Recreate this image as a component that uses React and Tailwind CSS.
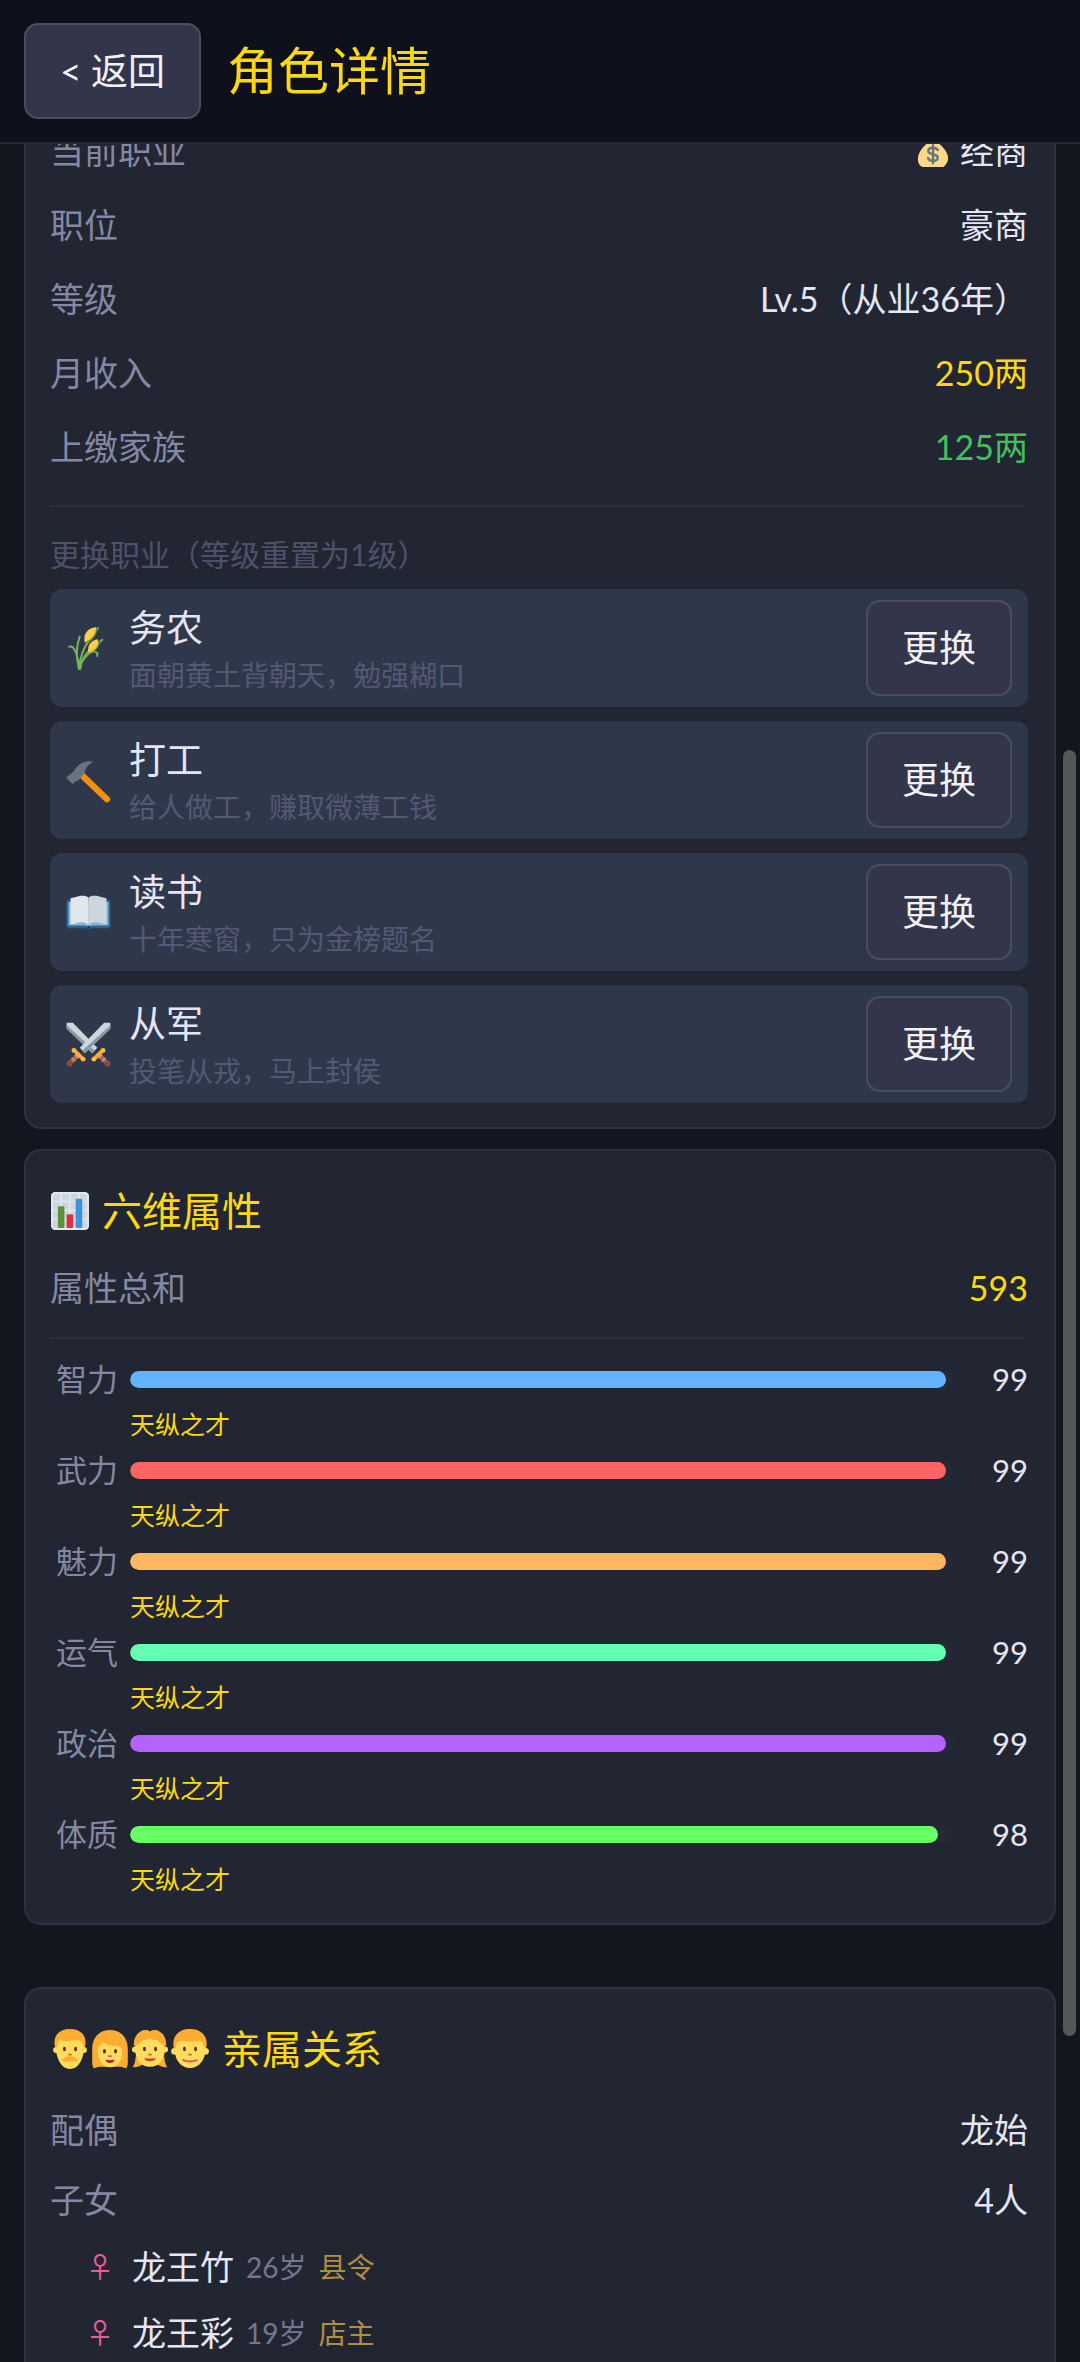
import React from "react";

const careerRows = [
  { label: "当前职业", value: "经商", color: "text-[#e4e6f5]", icon: true },
  { label: "职位", value: "豪商", color: "text-[#e4e6f5]" },
  { label: "等级", value: "Lv.5（从业36年）", color: "text-[#e4e6f5]" },
  { label: "月收入", value: "250两", color: "text-[#fbd814]" },
  { label: "上缴家族", value: "125两", color: "text-[#43c05c]" },
];

const stats = [
  { label: "智力", value: 99, color: "bg-[#63b3ff]" },
  { label: "武力", value: 99, color: "bg-[#ff6363]" },
  { label: "魅力", value: 99, color: "bg-[#ffb663]" },
  { label: "运气", value: 99, color: "bg-[#63ffb3]" },
  { label: "政治", value: 99, color: "bg-[#b363ff]" },
  { label: "体质", value: 98, color: "bg-[#66ff66]" },
];

const children = [
  { name: "龙王竹", age: "26岁", job: "县令" },
  { name: "龙王彩", age: "19岁", job: "店主" },
];

function MoneyBag() {
  return (
    <svg viewBox="0 0 36 36" className="size-[34px] shrink-0" aria-hidden="true">
      <path fill="#fdd888" d="M13 9 9.500 2.500c2-2 4.500.5 8.500-1.500 3 2 6 0 8.500 1.500L23 9c5 4 11 10 11 17 0 3-2 7-5 9H7c-3-1-5-4-5-8 0-8 6-14 11-18z" />
      <path fill="#bf6952" d="M12 6h12v2H12z" />
      <path fill="none" stroke="#67757f" strokeWidth="2.600" strokeLinecap="round" d="M18 12v19M23 17c-1-2-3-2.500-5-2.500-3 0-5 1.300-5 3.400 0 5 10 2.200 10 7 0 2-2 3.600-5 3.600-2.500 0-4.500-1-5.200-3" />
    </svg>
  );
}

function Rice() {
  return (
    <svg viewBox="0 0 36 36" className="size-[45px]" aria-hidden="true">
      <g fill="none" stroke="#77b255" strokeWidth="1.600" strokeLinecap="round">
        <path d="M10.500 34C8 25 8.500 15 11 8.500" />
        <path d="M9.500 27C8 20 6 15.500 2.500 16.500" />
        <path d="M11 34C11 25 14 17 19 11L25.500 1.500" />
        <path d="M11.500 34c1-7 5-13 9-16L29 11" />
        <path d="M12.500 29c4-6 7-9 10.500-8.500 2 .3 2.500 2 2 3.500" />
      </g>
      <path fill="#5c913b" d="M15 13.500c4 .5 10-5 10-12l-5 4z" />
      <path fill="#ffcc4d" d="M15 13c-1.500-6 2-11.500 9-12 .5 5-3.500 10-9 12z" />
      <path fill="#5c913b" d="M18 22c5-.5 9-5 9.500-10l-5 3z" />
      <path fill="#ffcc4d" d="M18 21.500c-1.500-5.500 2-10.500 7.500-11 1.500 4.500-2 9.500-7.500 11z" />
      <path fill="#77b255" d="M9 27h3.500L12 35h-2.500z" />
    </svg>
  );
}

function Hammer() {
  return (
    <svg viewBox="0 0 36 36" className="size-[45px]" aria-hidden="true">
      <path stroke="#f4900c" strokeWidth="5" strokeLinecap="round" d="M12.500 13.500 32.800 33" />
      <path fill="#66757f" d="M22 3C16 1.500 11 4 7.500 8.500c-1 1.500-1.500 2.500-3 3.500L.8 15c-.6.500-.4 1 0 1.400l3.800 3.900c.5.500 1 .4 1.400 0l1-1.300c.8-.8 1.600-.3 2.500-.6L15 12c0-3.500 3-7 7-9z" />
    </svg>
  );
}

function Book() {
  return (
    <svg viewBox="0 0 36 36" className="size-[45px]" aria-hidden="true">
      <path fill="#226699" d="M2 8h32c1 0 1.600.8 1.600 2v18.500c0 1.200-.8 2-2 2H20c-.6 1-3.400 1-4 0H2.400c-1.200 0-2-.8-2-2V10C.4 8.800 1 8 2 8z" />
      <path fill="#8fb4cf" d="M2 9.500h32v18.800H20.500L18 29.500l-2.500-1.200H2z" />
      <path fill="#e1e8ed" d="M3.600 6.500C8 6 10 4.600 13 4.600c2.500 0 4 .4 5 1.600v21.500c-2-1.800-4-2-6-2-3 0-4.500 1.600-8.400 1.500z" />
      <path fill="#ccd6dd" d="M32.400 6.500C28 6 26 4.600 23 4.600c-2.500 0-4 .4-5 1.600v21.500c2-1.800 4-2 6-2 3 0 4.500 1.600 8.400 1.500z" />
      <path fill="#99aab5" d="M12 26.500c2.500-.6 5 .3 6 1.700 1-1.400 3.500-2.300 6-1.700-2 .4-4.500 1-6 2.200-1.500-1.200-4-1.800-6-2.200z" />
      <circle cx="18" cy="29.500" r="1" fill="#0d3a5c" />
    </svg>
  );
}

function Sword() {
  return (
    <>
      <path fill="#ccd6dd" d="M.5.500h5L25 20.500 21 25 .5 5z" />
      <path fill="#8899a6" d="M.5 2.500 23 23l-2 2L.5 5.500z" />
      <path stroke="#aa695b" strokeWidth="3.600" d="m25 25 7 7" />
      <path stroke="#d99e82" strokeWidth="1" d="m26 29 3-3M28.500 31.500l3-3" />
      <path stroke="#ffac33" strokeWidth="3" strokeLinecap="round" d="m22.500 29.500 6.500-6.500" />
      <circle cx="22.300" cy="29.700" r="1.900" fill="#fdb94e" />
      <circle cx="29.700" cy="22.700" r="1.900" fill="#fdb94e" />
      <circle cx="33.200" cy="33.200" r="2.400" fill="#8a4b38" />
    </>
  );
}

function Swords() {
  return (
    <svg viewBox="0 0 36 36" className="size-[45px]" aria-hidden="true">
      <Sword />
      <g transform="matrix(-1 0 0 1 36 0)">
        <Sword />
      </g>
    </svg>
  );
}

function Chart() {
  return (
    <svg viewBox="0 0 36 36" className="mx-px size-[38px]" aria-hidden="true">
      <rect width="36" height="36" rx="4" fill="#ccd6dd" />
      <path stroke="#e1e8ed" strokeWidth="1.600" d="M2 9h32M2 17.500h32M2 26h32M9.500 2v32M18 2v32M26.500 2v32" />
      <rect x="1" y="1" width="34" height="34" rx="3.500" fill="none" stroke="#e1e8ed" strokeWidth="2" />
      <rect x="6.500" y="13.500" width="6.200" height="20.500" rx="1.200" fill="#5c913b" />
      <rect x="14.800" y="21" width="6.200" height="13" rx="1.200" fill="#dd2e44" />
      <rect x="23.400" y="6.500" width="6.200" height="27.500" rx="1.200" fill="#3b94d9" />
    </svg>
  );
}

function Eyes() {
  return (
    <>
      <ellipse cx="13" cy="18" rx="1.300" ry="2.100" fill="#662113" />
      <ellipse cx="23" cy="18" rx="1.300" ry="2.100" fill="#662113" />
      <path stroke="#c1694f" strokeWidth="1.600" strokeLinecap="round" d="M17 23h2" />
    </>
  );
}

function Man() {
  return (
    <svg viewBox="0 0 36 36" className="size-10" aria-hidden="true">
      <circle cx="5.500" cy="19" r="2.700" fill="#ffdc5d" />
      <circle cx="30.500" cy="19" r="2.700" fill="#ffdc5d" />
      <path fill="#ffdc5d" d="M5 14C5 7 11 3 18 3s13 4 13 11c0 10-4 22-13 22S5 24 5 14z" />
      <path fill="#ffac33" d="M18 0C9 0 4 5 4 12c0 3 .6 4.500 1.500 4.500 1 0 .5-4 3.500-7.500 1.500 1.500 3 2 6 2 4 0 8-1.500 11-1 4 .5 3.500 6.500 4.500 6.500S32 15 32 12C32 5 27 0 18 0z" />
      <Eyes />
      <path fill="#ffac33" d="M18 24.500c3 0 6.500 2 7 4-3 1.200-5 .6-7 .6s-4 .6-7-.6c.5-2 4-4 7-4z" />
    </svg>
  );
}

function Woman() {
  return (
    <svg viewBox="0 0 36 36" className="size-10" aria-hidden="true">
      <path fill="#ffac33" d="M18 1C8 1 2 8 2 18v12c0 2.500.5 4.500 1.500 5.500 2-1 4-1.500 7-1.500h15c3 0 5 .5 7 1.500 1-1 1.500-3 1.500-5.500V18C34 8 28 1 18 1z" />
      <path fill="#ffdc5d" d="M7 19c0-3 3-5 5.500-7 2 2 4.500 3 8.500 3 4 0 8 1 8 5 0 9-4.500 14.500-11 14.500S7 28 7 19z" />
      <ellipse cx="13" cy="20" rx="1.300" ry="2.100" fill="#662113" />
      <ellipse cx="23" cy="20" rx="1.300" ry="2.100" fill="#662113" />
      <path stroke="#c1694f" strokeWidth="1.600" strokeLinecap="round" d="M17 24.500h2" />
      <path fill="#be1931" d="M14 27.500c2 .8 6 .8 8 0 0 2-1.500 3.200-4 3.200s-4-1.200-4-3.200z" />
    </svg>
  );
}

function Girl() {
  return (
    <svg viewBox="0 0 36 36" className="size-10" aria-hidden="true">
      <path fill="#ffac33" d="M5 25c0 4-1 7-2.500 9.500 3 0 6-.5 9-2.500h13c3 2 6 2.500 9 2.500C32 32 31 29 31 25z" />
      <circle cx="4.500" cy="18.500" r="2.700" fill="#ffdc5d" />
      <circle cx="31.500" cy="18.500" r="2.700" fill="#ffdc5d" />
      <path fill="#ffdc5d" d="M4.500 17C4.500 9 10 4 18 4s13.500 5 13.500 13c0 10-5 17-13.500 17S4.500 27 4.500 17z" />
      <path fill="#ffac33" d="M18 2.200C15.500.5 12 .7 9.500 2.200 5 4.800 3 10 3.500 15c4-.5 6-2 7.500-5 3 0 5.500 0 7-1.800C19.500 10 22 10 25 10c1.500 3 3.500 4.500 7.500 5 .5-5-1.500-10.200-6-12.800C24 .7 20.500.5 18 2.200z" />
      <Eyes />
      <path fill="#e0392f" d="M13 26c3 .8 7 .8 10 0 0 1.800-2 3-5 3s-5-1.200-5-3z" />
    </svg>
  );
}

function Boy() {
  return (
    <svg viewBox="0 0 36 36" className="size-10" aria-hidden="true">
      <circle cx="4" cy="20" r="3" fill="#ffdc5d" />
      <circle cx="32" cy="20" r="3" fill="#ffdc5d" />
      <path fill="#ffdc5d" d="M4 17C4 9 10 4 18 4s14 5 14 13c0 11-6 18-14 18S4 28 4 17z" />
      <path fill="#ffac33" d="M18 0C8 0 3 6 3 13c0 2.500.3 4.500 1 4.500 1.500 0 1-4.500 4-6.500 3-1 7 .5 10 .5s7-1.500 10-.5c3 2 2.500 6.500 4 6.500.7 0 1-2 1-4.500C33 6 28 0 18 0z" />
      <Eyes />
      <path fill="none" stroke="#c1694f" strokeWidth="1.800" strokeLinecap="round" d="M12 28c3 1.600 9 1.600 12 0" />
    </svg>
  );
}

const jobs = [
  { name: "务农", desc: "面朝黄土背朝天，勉强糊口", Icon: Rice },
  { name: "打工", desc: "给人做工，赚取微薄工钱", Icon: Hammer },
  { name: "读书", desc: "十年寒窗，只为金榜题名", Icon: Book },
  { name: "从军", desc: "投笔从戎，马上封侯", Icon: Swords },
];

const cardClass = "mx-6 rounded-[17px] border-2 border-[#2d3142] bg-[#222633] py-6 pr-[26px] pl-6";

function Row({ label, value, color = "text-[#e4e6f5]", icon }) {
  return (
    <div className="flex h-[50px] items-center justify-between text-[34px] leading-[50px]">
      <dt className="text-[#8488a3]">{label}</dt>
      <dd className={"flex items-center gap-[10px] " + color}>
        {icon && <MoneyBag />}
        {value}
      </dd>
    </div>
  );
}

function Title({ icons, children: text }) {
  return (
    <h2 className="flex items-center gap-3 text-[40px] leading-[72px] text-[#fbd814]">
      <span className="flex">{icons}</span>
      {text}
    </h2>
  );
}

function GameButton({ children: text }) {
  return (
    <button
      type="button"
      className="h-24 shrink-0 rounded-[14px] border-2 border-[#4a4e63] bg-[#33364a] px-[34px] text-[37px] leading-[50px] text-[#f0f1fa]"
    >
      {text}
    </button>
  );
}

export default function App() {
  return (
    <div className="relative flex h-screen flex-col overflow-hidden bg-[#13161e] font-['Lato','Noto_Sans_CJK_SC',sans-serif]">
      <header className="flex h-36 shrink-0 items-center gap-[26px] border-b-2 border-[#252835] bg-[#0e111b] px-6">
        <GameButton>&lt; 返回</GameButton>
        <h1 className="text-[51px] leading-[72px] text-[#fbd814]">角色详情</h1>
      </header>

      <main className="min-h-0 flex-1 overflow-hidden">
        <section className={cardClass + " -mt-11"}>
          <dl className="flex flex-col gap-6">
            {careerRows.map((r) => (
              <Row key={r.label} {...r} />
            ))}
          </dl>
          <hr className="mt-[33px] border-t-2 border-[#2a2e3c]" />
          <h3 className="mt-6 text-[30px] leading-[46px] text-[#4d526c]">更换职业（等级重置为1级）</h3>
          <ul className="mt-3 flex flex-col gap-[14px]">
            {jobs.map(({ name, desc, Icon }) => (
              <li key={name} className="flex h-[118px] items-center rounded-[12px] bg-[#2f374a] px-4">
                <Icon />
                <div className="ml-[18px] flex-1">
                  <p className="text-[37px] leading-[54px] text-[#e4e6f5]">{name}</p>
                  <p className="text-[28px] leading-10 text-[#535974]">{desc}</p>
                </div>
                <GameButton>更换</GameButton>
              </li>
            ))}
          </ul>
        </section>

        <section className={cardClass + " mt-5"}>
          <Title icons={<Chart />}>六维属性</Title>
          <dl className="mt-4">
            <Row label="属性总和" value="593" color="text-[#fbd814]" />
          </dl>
          <hr className="mt-6 mb-[14px] border-t-2 border-[#2a2e3c]" />
          {stats.map((s) => (
            <div key={s.label} className="pt-[6px] pb-[5px]">
              <div className="flex h-[41px] items-center gap-3 text-[31px] leading-[41px]">
                <span className="w-[68px] text-right text-[#8488a3]">{s.label}</span>
                <div className="h-[17px] flex-1 overflow-hidden rounded-full bg-[#252935]">
                  <div className={"h-full rounded-full " + s.color} style={{ width: s.value + "%" }} />
                </div>
                <span className="w-[62px] text-right text-[#e4e6f5]">{s.value}</span>
              </div>
              <p className="mt-[9px] ml-20 text-[25px] leading-[30px] text-[#fbd814]">天纵之才</p>
            </div>
          ))}
        </section>

        <section className={cardClass + " mt-[62px]"}>
          <Title
            icons={
              <>
                <Man />
                <Woman />
                <Girl />
                <Boy />
              </>
            }
          >
            亲属关系
          </Title>
          <dl className="mt-5 flex flex-col gap-5">
            <Row label="配偶" value="龙始" />
            <Row label="子女" value="4人" />
          </dl>
          <ul className="mt-[17px] flex flex-col gap-4 pb-32">
            {children.map((c) => (
              <li key={c.name} className="flex h-[50px] items-center leading-[50px]">
                <span className="ml-[34px] w-8 text-center text-[28px] text-[#ec5c9a]">♀</span>
                <a href="#character" className="ml-4 text-[34px] text-[#e4e6f5]">{c.name}</a>
                <span className="ml-3 text-[28px] text-[#73778f]">{c.age}</span>
                <span className="ml-3 text-[28px] text-[#b08f42]">{c.job}</span>
              </li>
            ))}
          </ul>
        </section>
      </main>

      <div className="absolute top-[750px] right-1 h-[1286px] w-[13px] rounded-full bg-[#545657]" aria-hidden="true" />
    </div>
  );
}
